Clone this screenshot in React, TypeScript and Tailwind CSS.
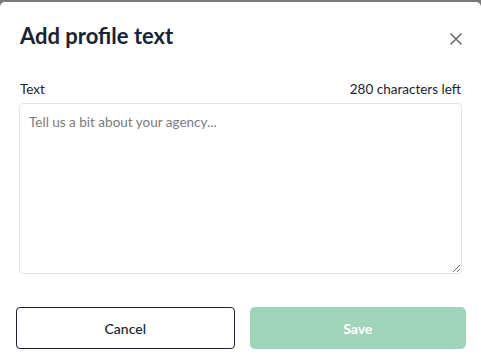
import React, { useState } from "react";

export default function App() {
  const [text, setText] = useState("");
  const max = 280;

  return (
    <div className="w-[481px] h-[363px] bg-[#7a7a7a] overflow-hidden font-['Lato',sans-serif]">
      <div className="mt-[2px] h-[361px] bg-white rounded-t-[5px] flex flex-col">
        <div className="flex items-start justify-between pl-5 pr-[19px] pt-[20px]">
          <h2 className="text-[22px] leading-[28px] font-bold text-[#1b2233]">
            Add profile text
          </h2>
          <button className="mt-[11px] text-[#6d7075]" aria-label="Close">
            <svg width="12" height="12" viewBox="0 0 12 12" fill="none">
              <path
                d="M1 1 L11 11 M11 1 L1 11"
                stroke="currentColor"
                strokeWidth="1.7"
                strokeLinecap="round"
              />
            </svg>
          </button>
        </div>

        <div className="pl-5 pr-[20px] mt-[30px]">
          <div className="flex items-center justify-between text-[13.5px] leading-[18px] text-[#1b2233]">
            <label>Text</label>
            <span>{max - text.length} characters left</span>
          </div>
          <textarea
            value={text}
            onChange={(e) => setText(e.target.value.slice(0, max))}
            placeholder="Tell us a bit about your agency..."
            className="mt-[5px] -ml-px w-[443px] h-[171px] block border border-[#e3e3e3] rounded-[4px] px-[9px] pt-[9px] text-[13.5px] leading-[18px] text-[#1b2233] placeholder:text-[#7b7b7b] focus:outline-none"
          />
        </div>

        <div className="flex gap-[15px] pl-4 pr-[15px] mt-[33px]">
          <button className="flex-1 h-[42px] border border-[#1b2233] rounded-[4px] text-[14px] font-medium text-[#1b2233] bg-white">
            Cancel
          </button>
          <button
            disabled
            className="flex-1 h-[42px] rounded-[5px] bg-[#a0d5bb] text-[14px] font-bold text-white"
          >
            Save
          </button>
        </div>
      </div>
    </div>
  );
}
